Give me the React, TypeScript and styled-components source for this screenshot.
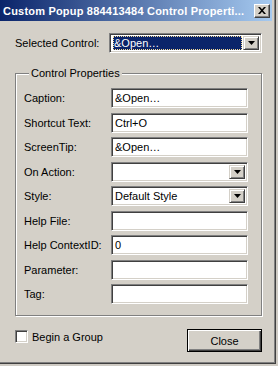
import styled, { createGlobalStyle } from 'styled-components';

const GlobalStyle = createGlobalStyle`
  html, body {
    margin: 0;
    padding: 0;
    background: #cfcbc4;
  }
  body {
    font-family: 'Liberation Sans', Arial, sans-serif;
    font-size: 11px;
    color: #000;
  }
`;

const fields = [
  { label: 'Caption:', value: '&Open…', kind: 'text' },
  { label: 'Shortcut Text:', value: 'Ctrl+O', kind: 'text' },
  { label: 'ScreenTip:', value: '&Open…', kind: 'text' },
  { label: 'On Action:', value: '', kind: 'combo' },
  { label: 'Style:', value: 'Default Style', kind: 'combo' },
  { label: 'Help File:', value: '', kind: 'text' },
  { label: 'Help ContextID:', value: '0', kind: 'text' },
  { label: 'Parameter:', value: '', kind: 'text' },
  { label: 'Tag:', value: '', kind: 'text' },
];

function DropArrow() {
  return (
    <svg width='7' height='4' viewBox='0 0 7 4'>
      <path d='M0 0h7L3.5 4z' fill='#000' />
    </svg>
  );
}

function CloseGlyph() {
  return (
    <svg width='8' height='7' viewBox='0 0 8 7'>
      <path d='M0 0h2l2 2.2L6 0h2L5 3.5 8 7H6L4 4.8 2 7H0l3-3.5z' fill='#000' />
    </svg>
  );
}

function App() {
  return (
    <>
      <GlobalStyle />
      <Window>
        <TitleBar>
          <TitleText>Custom Popup 884413484 Control Properti...</TitleText>
          <CaptionButton>
            <CloseGlyph />
          </CaptionButton>
        </TitleBar>
        <Body>
          <TopRow>
            <span>Selected Control:</span>
            <Combo $width={153}>
              <ComboValue $selected>
                <span>&amp;Open…</span>
              </ComboValue>
              <ComboButton>
                <DropArrow />
              </ComboButton>
            </Combo>
          </TopRow>
          <Group>
            <legend>Control Properties</legend>
            <FieldGrid>
              {fields.map((f) => (
                <FieldRow key={f.label}>
                  <span>{f.label}</span>
                  {f.kind === 'combo' ? (
                    <Combo $width={137}>
                      <ComboValue>{f.value}</ComboValue>
                      <ComboButton>
                        <DropArrow />
                      </ComboButton>
                    </Combo>
                  ) : (
                    <TextBox>{f.value}</TextBox>
                  )}
                </FieldRow>
              ))}
            </FieldGrid>
          </Group>
          <Footer>
            <CheckLabel>
              <CheckBox />
              <span>Begin a Group</span>
            </CheckLabel>
            <PushButton>Close</PushButton>
          </Footer>
        </Body>
      </Window>
    </>
  );
}

const Window = styled.div`
  width: 276px;
  height: 364px;
  box-sizing: border-box;
  background: #d4d0c8;
  border-right: 1px solid #404040;
  border-bottom: 1px solid #404040;
  box-shadow: inset -1px -1px 0 #808080;
  padding: 0 3px 0 0;
  display: flex;
  flex-direction: column;
`;

const TitleBar = styled.div`
  height: 21px;
  display: flex;
  align-items: center;
  justify-content: space-between;
  padding: 0 0 0 3px;
  background: linear-gradient(to right, #0a246a, #a6caf0);
  color: #fff;
`;

const TitleText = styled.span`
  font-weight: bold;
  font-size: 11px;
  letter-spacing: 0.2px;
  white-space: nowrap;
`;

const CaptionButton = styled.div`
  flex-shrink: 0;
  width: 16px;
  height: 14px;
  box-sizing: border-box;
  margin-right: 2px;
  background: #d4d0c8;
  border-top: 1px solid #fff;
  border-left: 1px solid #fff;
  border-right: 1px solid #404040;
  border-bottom: 1px solid #404040;
  box-shadow: inset -1px -1px 0 #808080;
  display: flex;
  align-items: center;
  justify-content: center;
`;

const Body = styled.div`
  flex: 1;
  display: flex;
  flex-direction: column;
  padding: 0 10px 0 15px;
`;

const TopRow = styled.div`
  margin-top: 12px;
  height: 20px;
  display: flex;
  align-items: center;
  justify-content: space-between;
`;

const sunken = `
  box-sizing: border-box;
  border-top: 1px solid #808080;
  border-left: 1px solid #808080;
  border-right: 1px solid #fff;
  border-bottom: 1px solid #fff;
  box-shadow: inset 1px 1px 0 #404040, inset -1px -1px 0 #d4d0c8;
  background: #fff;
`;

const Combo = styled.div<{ $width: number }>`
  ${sunken}
  width: ${({ $width }) => $width}px;
  height: 20px;
  padding: 2px;
  display: flex;
  align-items: stretch;
`;

const ComboValue = styled.div<{ $selected?: boolean }>`
  flex: 1;
  display: flex;
  align-items: center;
  padding-left: 1px;
  white-space: nowrap;
  overflow: hidden;

  ${({ $selected }) =>
    $selected &&
    `
    span {
      flex: 1;
      align-self: stretch;
      display: flex;
      align-items: center;
      margin-right: 1px;
      padding-left: 1px;
      background: #0a246a;
      color: #fff;
      outline: 1px dotted #f5db95;
      outline-offset: -1px;
    }
  `}
`;

const ComboButton = styled.div`
  width: 16px;
  box-sizing: border-box;
  background: #d4d0c8;
  border-top: 1px solid #d4d0c8;
  border-left: 1px solid #d4d0c8;
  border-right: 1px solid #404040;
  border-bottom: 1px solid #404040;
  box-shadow: inset 1px 1px 0 #fff, inset -1px -1px 0 #808080;
  display: flex;
  align-items: center;
  justify-content: center;
`;

const Group = styled.fieldset`
  margin: 14px 0 0 0;
  width: 247px;
  box-sizing: border-box;
  padding: 8px 12px 11px 8px;
  border: 1px solid #808080;
  box-shadow: inset 1px 1px 0 #fff, 1px 1px 0 #fff;

  legend {
    padding: 0 2px;
    margin-left: 5px;
    line-height: 13px;
    background: #d4d0c8;
  }
`;

const FieldGrid = styled.div`
  display: flex;
  flex-direction: column;
  gap: 4.5px;
`;

const FieldRow = styled.div`
  display: grid;
  grid-template-columns: 87px 137px;
  align-items: center;
  height: 20px;
`;

const TextBox = styled.div`
  ${sunken}
  height: 20px;
  padding: 0 3px;
  display: flex;
  align-items: center;
  white-space: nowrap;
`;

const Footer = styled.div`
  margin-top: 13px;
  display: flex;
  align-items: flex-start;
  justify-content: space-between;
`;

const CheckLabel = styled.label`
  margin-top: 1px;
  display: flex;
  align-items: center;
  gap: 4px;
`;

const CheckBox = styled.span`
  ${sunken}
  display: block;
  width: 13px;
  height: 13px;
`;

const PushButton = styled.div`
  width: 75px;
  height: 23px;
  box-sizing: border-box;
  border: 1px solid #000;
  background: #d4d0c8;
  box-shadow: inset 1px 1px 0 #fff, inset -1px -1px 0 #404040,
    inset -2px -2px 0 #808080;
  display: flex;
  align-items: center;
  justify-content: center;
`;

export default App;
